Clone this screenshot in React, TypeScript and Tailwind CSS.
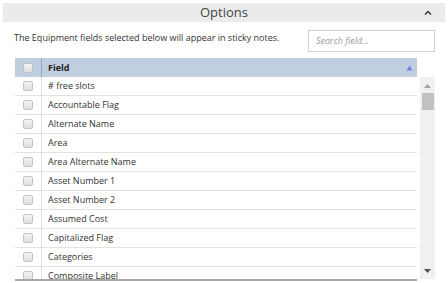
import React from 'react';

const fields = [
  '# free slots',
  'Accountable Flag',
  'Alternate Name',
  'Area',
  'Area Alternate Name',
  'Asset Number 1',
  'Asset Number 2',
  'Assumed Cost',
  'Capitalized Flag',
  'Categories',
  'Composite Label',
];

function Checkbox() {
  return (
    <span className="block w-[10px] h-[10px] rounded-[2px] border border-[#c4c4c4] bg-gradient-to-b from-[#f4f4f4] to-[#dedede]" />
  );
}

export default function App() {
  return (
    <div className="w-[448px] h-[283px] bg-white overflow-hidden font-['Open_Sans',sans-serif] text-[#333]">
      {/* Section header */}
      <div className="mx-[3px] mt-[3px] h-[19px] bg-[#ebebeb] flex items-center justify-center relative">
        <span className="text-[13px] text-[#444] leading-none">Options</span>
        <svg className="absolute right-[13px] top-[7px]" width="8" height="5" viewBox="0 0 8 5">
          <path d="M1 4.5 L4 1.5 L7 4.5" fill="none" stroke="#333" strokeWidth="1.4" />
        </svg>
      </div>

      {/* Description + search */}
      <div className="flex justify-between items-start pl-[14px] pr-[13px] mt-[8px]">
        <p className="text-[9px] mt-[2px] leading-[12px]">
          The Equipment fields selected below will appear in sticky notes.
        </p>
        <div className="w-[127px] h-[22px] border border-[#cfcfcf] flex items-center px-[7px]">
          <span className="text-[9px] italic text-[#9a9a9a]">Search field...</span>
        </div>
      </div>

      {/* Field grid */}
      <div className="ml-[15px] mt-[6px] flex gap-[3px] h-[223px]">
        <div className="w-[402px] flex flex-col overflow-hidden border-b-2 border-[#a8a8a8]">
          <div className="h-[19px] shrink-0 bg-[#bfcfe0] flex items-center">
            <div className="w-[27px] h-full flex items-center justify-center border-r border-[#8fa6c0]">
              <Checkbox />
            </div>
            <span className="pl-[6px] text-[9px] font-bold text-[#222] flex-1">Field</span>
            <svg className="mr-[4px]" width="7" height="6" viewBox="0 0 7 6">
              <path d="M3.5 0.5 L6.5 5.5 L0.5 5.5 Z" fill="#7b7fe0" />
            </svg>
          </div>
          {fields.map((f) => (
            <div key={f} className="h-[19px] shrink-0 flex items-center border-b border-[#e2e2e2]">
              <div className="w-[27px] h-full flex items-center justify-center border-r border-[#e2e2e2]">
                <Checkbox />
              </div>
              <span className="pl-[6px] text-[9px]">{f}</span>
            </div>
          ))}
        </div>

        {/* Scrollbar */}
        <div className="w-[15px] mt-[19px] mb-[2px] bg-[#f0f0f0] flex flex-col items-center">
          <svg className="mt-[7px]" width="7" height="4" viewBox="0 0 7 4">
            <path d="M3.5 0 L7 4 L0 4 Z" fill="#a3a3a3" />
          </svg>
          <div className="mt-[5px] w-[12px] h-[17px] bg-[#c1c1c1]" />
          <div className="flex-1" />
          <svg className="mb-[6px]" width="7" height="4" viewBox="0 0 7 4">
            <path d="M0 0 L7 0 L3.5 4 Z" fill="#505050" />
          </svg>
        </div>
      </div>
    </div>
  );
}
